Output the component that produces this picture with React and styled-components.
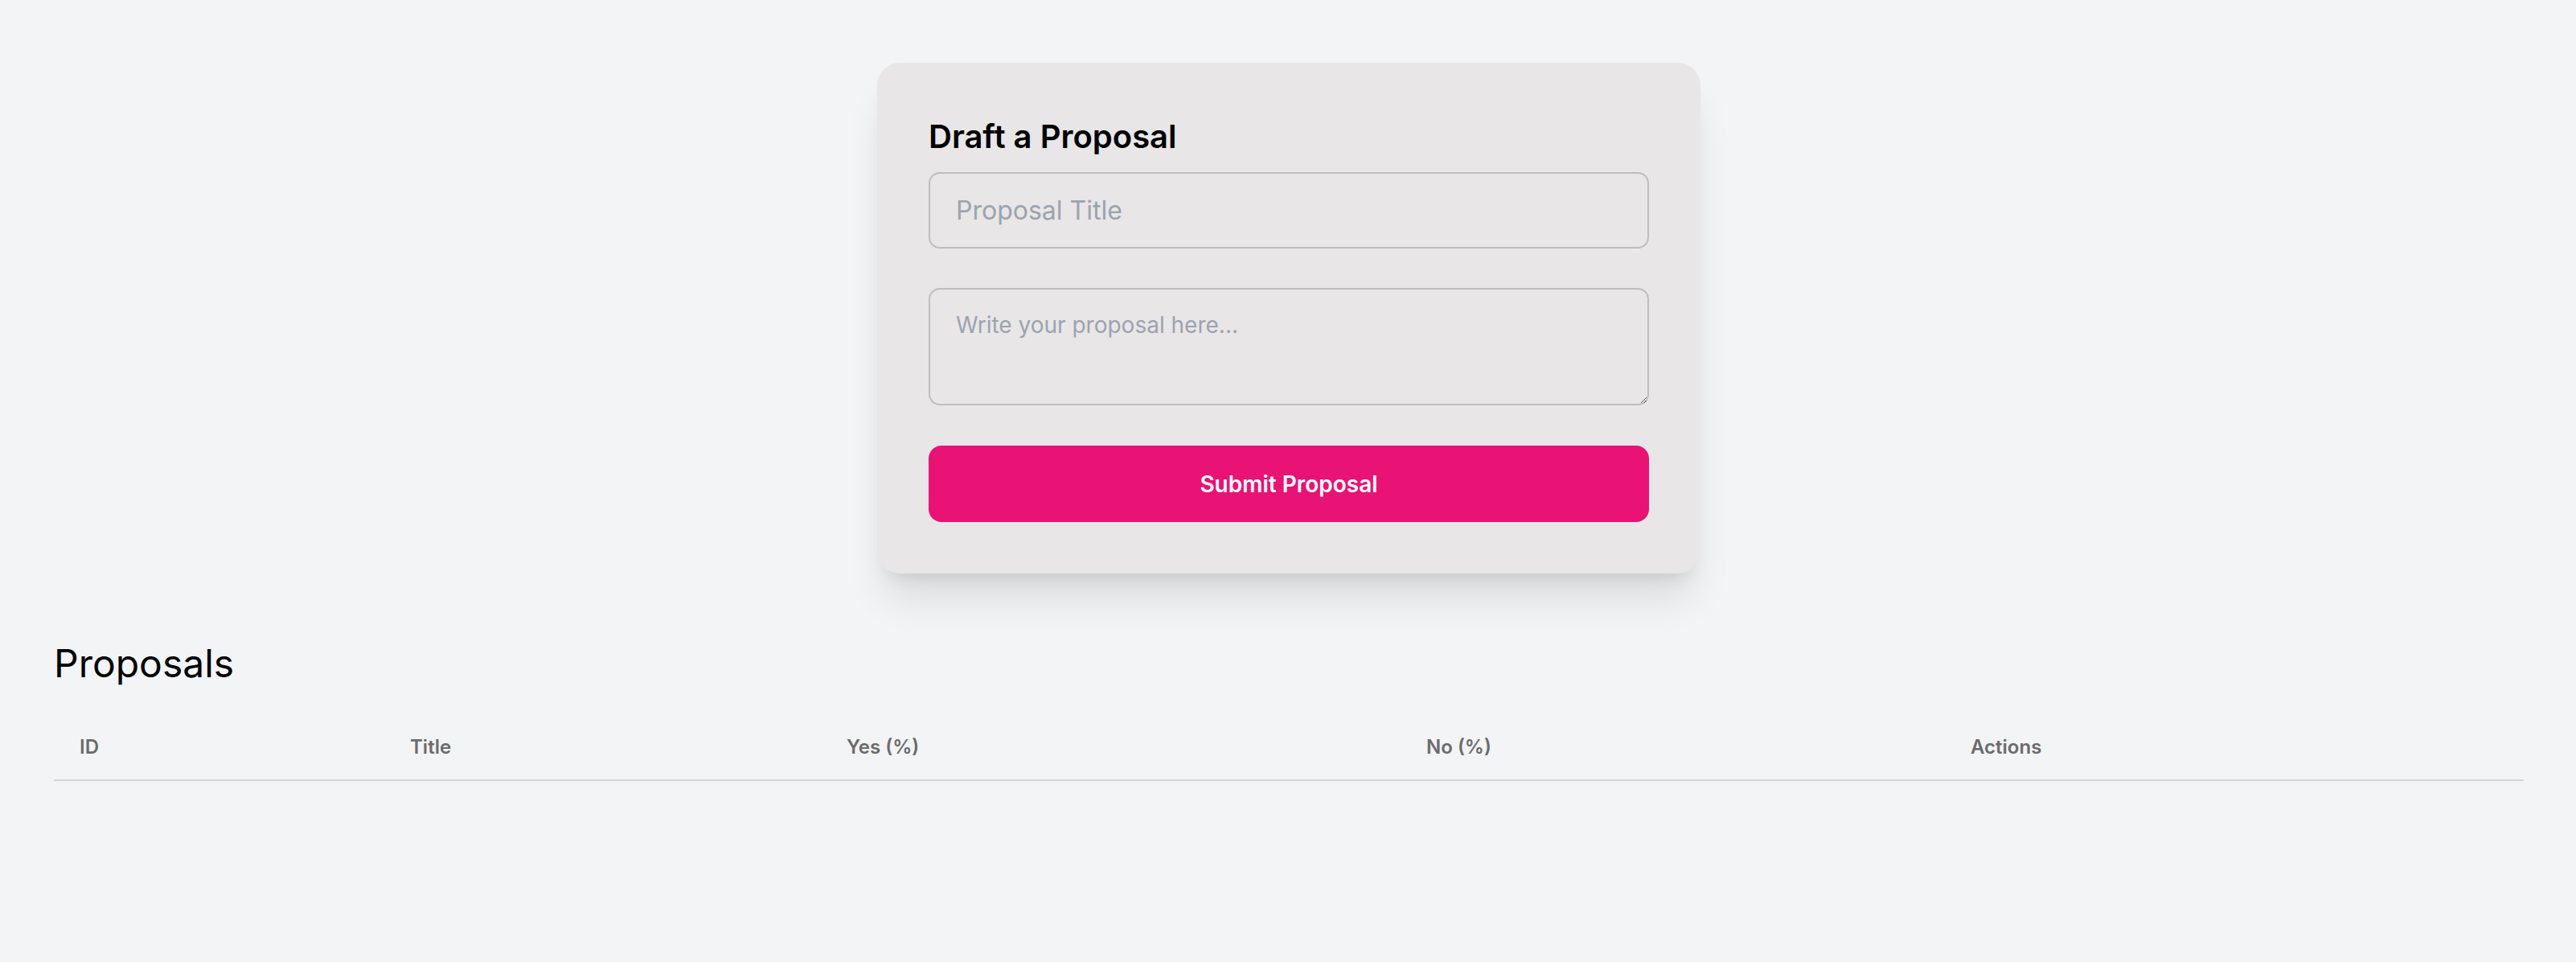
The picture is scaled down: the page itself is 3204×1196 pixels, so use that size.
import React from 'react';
import styled, { createGlobalStyle } from 'styled-components';

const GlobalStyle = createGlobalStyle`
    * {
        box-sizing: border-box;
    }

    body {
        margin: 0;
        background: #f3f4f6;
        font-family: Inter, "Liberation Sans", sans-serif;
        color: #000;
    }
`

const Page = styled.main`
    padding: 78px 65px 80px 67px;
`

const Card = styled.section`
    width: 1024px;
    margin: 0 auto;
    padding: 64px;
    background: #e8e6e7;
    border-radius: 28px;
    box-shadow: 0 40px 50px -10px rgba(0, 0, 0, 0.1), 0 16px 20px -12px rgba(0, 0, 0, 0.1);
`

const CardTitle = styled.h2`
    margin: 0 0 16px;
    font-size: 40px;
    line-height: 56px;
    font-weight: 600;
`

const Field = styled.input`
    display: block;
    width: 100%;
    height: 95px;
    margin-bottom: 49px;
    padding: 0 32px;
    border: 2px solid #bfbdbe;
    border-radius: 14px;
    background: transparent;
    font-family: inherit;
    font-size: 32px;
    color: #111;

    &::placeholder {
        color: #9ca3af;
    }
`

const TextArea = styled.textarea`
    display: block;
    width: 100%;
    height: 146px;
    margin-bottom: 50px;
    padding: 24px 32px;
    border: 2px solid #bfbdbe;
    border-radius: 14px;
    background: transparent;
    font-family: inherit;
    font-size: 28px;
    line-height: 40px;
    color: #111;
    resize: vertical;

    &::placeholder {
        color: #9ca3af;
    }
`

const SubmitButton = styled.button`
    display: block;
    width: 100%;
    height: 95px;
    border: none;
    border-radius: 16px;
    background: #e91275;
    color: #fff;
    font-family: inherit;
    font-size: 28px;
    font-weight: 600;
    cursor: pointer;
`

const SectionTitle = styled.h1`
    margin: 80px 0 32px;
    font-size: 48px;
    line-height: 64px;
    font-weight: 400;
`

const Table = styled.table`
    width: 100%;
    border-collapse: collapse;
    table-layout: fixed;
`

const HeadRow = styled.tr`
    border-bottom: 2px solid #d3d4d7;
`

const HeadCell = styled.th`
    padding: 24px 32px;
    text-align: left;
    font-size: 24px;
    line-height: 32px;
    font-weight: 600;
    color: #6b6b6b;
`

const columns = [
    { label: 'ID', width: 411 },
    { label: 'Title', width: 543 },
    { label: 'Yes (%)', width: 721 },
    { label: 'No (%)', width: 677 },
    { label: 'Actions', width: 720 },
]

const App = () => {
    return (
        <>
            <GlobalStyle />
            <Page>
                <Card>
                    <CardTitle>Draft a Proposal</CardTitle>
                    <Field type="text" placeholder="Proposal Title" />
                    <TextArea placeholder="Write your proposal here..." />
                    <SubmitButton>Submit Proposal</SubmitButton>
                </Card>

                <SectionTitle>Proposals</SectionTitle>
                <Table>
                    <colgroup>
                        {columns.map(col => (
                            <col key={col.label} style={{ width: col.width }} />
                        ))}
                    </colgroup>
                    <thead>
                        <HeadRow>
                            {columns.map(col => (
                                <HeadCell key={col.label}>{col.label}</HeadCell>
                            ))}
                        </HeadRow>
                    </thead>
                    <tbody></tbody>
                </Table>
            </Page>
        </>
    )
}

export default App
